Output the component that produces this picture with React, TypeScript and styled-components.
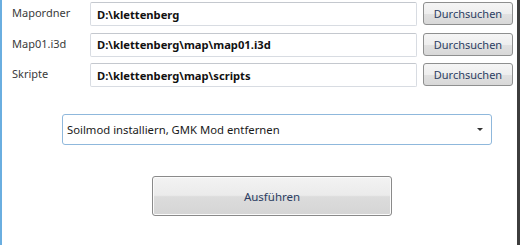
import { Fragment } from "react";
import styled, { createGlobalStyle } from "styled-components";

const GlobalStyle = createGlobalStyle`
  html, body {
    margin: 0;
    padding: 0;
    background: #ffffff;
  }
  body {
    font-family: "Noto Sans", "Open Sans", sans-serif;
  }
`;

const Window = styled.div`
  box-sizing: border-box;
  width: 520px;
  height: 245px;
  background: #ffffff;
  border-left: 2px solid #6aaee0;
  border-right: 3px solid #3d3d3d;
  padding: 2px 0 0 10px;
  display: flex;
  flex-direction: column;
`;

const PathGrid = styled.div`
  display: grid;
  grid-template-columns: 72px 327px 90px;
  grid-template-rows: repeat(3, 24px);
  column-gap: 6px;
  row-gap: 6.5px;
`;

const Label = styled.div`
  font-size: 11px;
  color: #3a3a3a;
  padding-top: 3px;
`;

const PathBox = styled.div`
  box-sizing: border-box;
  height: 24px;
  border: 1px solid #d8dce2;
  border-top-color: #c4c8ce;
  border-radius: 2px;
  padding: 0 6px;
  display: flex;
  align-items: center;
  font-size: 11.2px;
  font-weight: 700;
  color: #111111;
  white-space: nowrap;
  overflow: hidden;
`;

const BrowseButton = styled.button`
  box-sizing: border-box;
  height: 23px;
  border: 1px solid #8e8f8f;
  border-radius: 3px;
  background: linear-gradient(
    to bottom,
    #f5f5f5 0%,
    #eeeeee 50%,
    #e1e1e1 51%,
    #d8d8d8 100%
  );
  font-family: inherit;
  font-size: 11px;
  color: #2c3e63;
  padding: 0;
`;

const ModeSelect = styled.div`
  box-sizing: border-box;
  margin: 27px 0 0 50px;
  width: 430px;
  height: 31px;
  border: 1px solid #8fb8dc;
  border-radius: 3px;
  display: flex;
  align-items: center;
  justify-content: space-between;
  padding: 0 8px 0 4px;
  font-size: 11.3px;
  color: #1a1a1a;
`;

const Caret = styled.span`
  width: 0;
  height: 0;
  border-left: 3px solid transparent;
  border-right: 3px solid transparent;
  border-top: 3px solid #333333;
`;

const RunRow = styled.div`
  display: flex;
  padding-left: 140px;
  margin-top: 31px;
`;

const RunButton = styled.button`
  box-sizing: border-box;
  width: 240px;
  height: 40px;
  border: 1px solid #8a8a8a;
  border-radius: 3px;
  background: linear-gradient(
    to bottom,
    #f3f3f3 0%,
    #ebebeb 48%,
    #dcdcdc 52%,
    #d5d5d5 100%
  );
  box-shadow: inset 0 0 0 1px #fbfbfb;
  font-family: inherit;
  font-size: 11.5px;
  color: #2c3e63;
`;

const paths = [
  { label: "Mapordner", value: "D:\\klettenberg" },
  { label: "Map01.i3d", value: "D:\\klettenberg\\map\\map01.i3d" },
  { label: "Skripte", value: "D:\\klettenberg\\map\\scripts" },
];

export default function App() {
  return (
    <>
      <GlobalStyle />
      <Window>
        <PathGrid>
          {paths.map((p) => (
            <Fragment key={p.label}>
              <Label>{p.label}</Label>
              <PathBox>{p.value}</PathBox>
              <BrowseButton>Durchsuchen</BrowseButton>
            </Fragment>
          ))}
        </PathGrid>
        <ModeSelect>
          <span>Soilmod installiern, GMK Mod entfernen</span>
          <Caret />
        </ModeSelect>
        <RunRow>
          <RunButton>Ausführen</RunButton>
        </RunRow>
      </Window>
    </>
  );
}
